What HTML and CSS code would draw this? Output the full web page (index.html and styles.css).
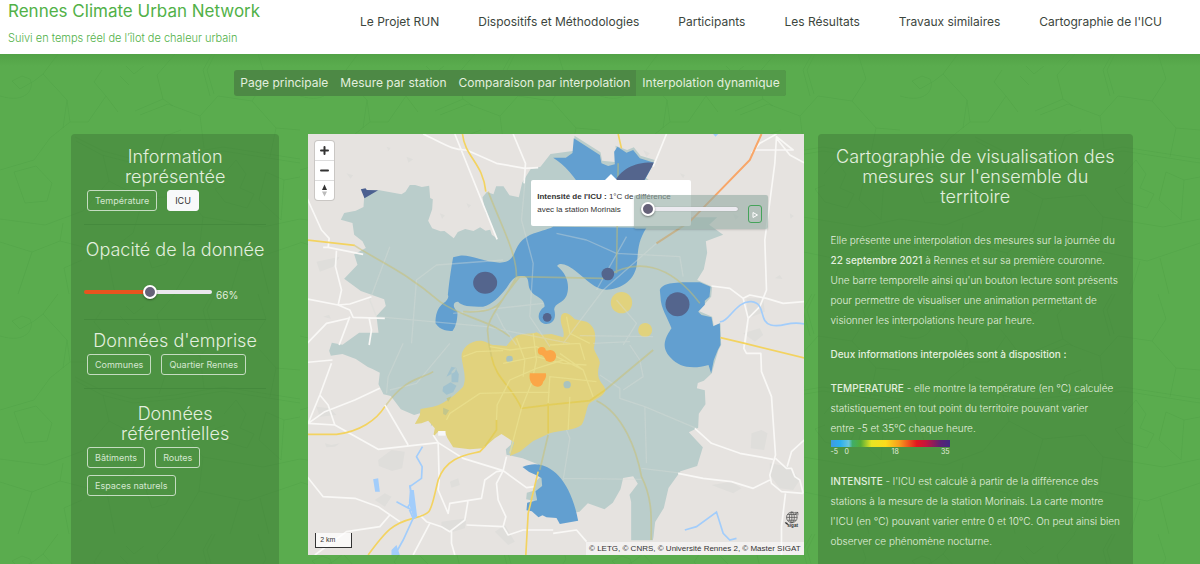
FILE: index.html
```html
<!DOCTYPE html>
<html lang="fr">
<head>
<meta charset="utf-8">
<meta name="viewport" content="width=device-width, initial-scale=1">
<title>Rennes Climate Urban Network</title>
<link rel="stylesheet" href="styles.css">
</head>
<body>
<header class="header">
  <div class="brand">
    <a class="brand-name" href="#">Rennes Climate Urban Network</a>
    <p class="brand-tag">Suivi en temps réel de l’îlot de chaleur urbain</p>
  </div>
  <nav class="menu">
    <a href="#">Le Projet RUN</a>
    <a href="#">Dispositifs et Méthodologies</a>
    <a href="#">Participants</a>
    <a href="#">Les Résultats</a>
    <a href="#">Travaux similaires</a>
    <a href="#">Cartographie de l'ICU</a>
  </nav>
</header>
<div class="page">
  <svg class="streets" aria-hidden="true">
    <defs>
      <pattern id="streets" width="300" height="240" patternUnits="userSpaceOnUse">
        <g fill="none" stroke="#4c9d43" stroke-opacity=".36" stroke-width="1">
          <path d="M0 42C26 50 35 35 30 25L22 22 12 27 20 35 34 27 43 20M43 20L58 0M43 20l24 26 3 22-20 16-16 22-34 10M70 68l18 0 18-26-12-14 8-12M106 42l12 16M67 46l-4 28M75 83l28 14 30 8 42-4 48-8 77 12M76 87l26 14 31 8 42-4 48-8 77 12M103 101l6 26-26 30-38 14-45-6M109 127l34 18 42-4 18 22 60 10 37-8M143 145l-10 34-26 20 8 41M203 163l-4 34-25 43M199 197l48 10 53-18M135 57l28-12-6-24 18-21M140 61l28-11 32 12 18-20 34 5 14-22-8-25M200 62l4 32M163 45l10 7M252 47l24 27 24 2M276 74l-6 29M18 240l14-42 28-11 47 12M32 198L0 188M60 187l3-18"/>
          <path d="M210 42l-7-26 9-16M214 40l-7-24 8-16M224 120l12-14 10 14-6 14 14 6-7 14-22-6-10-13 10-4M266 118l18 8 16-3M266 118l-7 28 22 20M284 126l-3 40M14 118l22-6 16 17-5 18-22 2zM146 196l12-7 14 9-6 12-14 4zM82 206l-18 8 5 26M230 240l10-33M260 204l9 36M126 12l8 8 10-8M120 22l9 9M181 76l-16 6-6 18"/>
        </g>
      </pattern>
    </defs>
    <rect width="100%" height="100%" fill="url(#streets)"/>
  </svg>
  <div class="tabs-row">
    <nav class="tabs">
      <a href="#">Page principale</a>
      <a href="#">Mesure par station</a>
      <a href="#">Comparaison par interpolation</a>
      <a class="active" href="#" aria-current="page">Interpolation dynamique</a>
    </nav>
  </div>
  <main class="columns">
    <aside class="panel controls">
      <section class="group">
        <h2>Information<br>représentée</h2>
        <div class="buttons">
          <button type="button" class="btn">Température</button>
          <button type="button" class="btn on">ICU</button>
        </div>
      </section>
      <section class="group opacity">
        <h2><label for="opacity">Opacité de la donnée</label></h2>
        <div class="slider-row">
          <input id="opacity" class="slider filled" type="range" min="0" max="100" value="52">
          <output for="opacity">66%</output>
        </div>
      </section>
      <section class="group">
        <h2>Données d'emprise</h2>
        <div class="buttons">
          <button type="button" class="btn">Communes</button>
          <button type="button" class="btn">Quartier Rennes</button>
        </div>
      </section>
      <section class="group">
        <h2>Données<br>référentielles</h2>
        <div class="buttons">
          <button type="button" class="btn">Bâtiments</button>
          <button type="button" class="btn">Routes</button>
          <button type="button" class="btn">Espaces naturels</button>
        </div>
      </section>
    </aside>

    <div class="map">
      <svg class="map-canvas" viewBox="12 12 1491 1263" preserveAspectRatio="xMidYMid slice" role="img" aria-label="Carte de l'ICU à Rennes">
        <rect x="0" y="0" width="1520" height="1290" fill="#e6e3e0"/>
        <g fill="#dfdedb">
          <path d="M225 990l40-30 40 5-8 50-30 8-40-15zM415 1175l75-10-5 30-35 10-35-8zM1345 910l30-10 18 10-10 50-40-5zM1400 1000l60 10 30 40-20 30-40-5-30-40zM1225 1065l60-10 30 20-25 15-20-8zM1330 505l50 0 5 40-50 20zM1320 610l50-15 10 20-25 20zM40 830l40 5 20 20-50 5zM575 1205l30-20 30 50-20 10zM215 1110l30-20 20 10-20 30zM40 395l70-15-20 30-40 15zM440 1055l25-10 5 20-25 8zM65 940l20 5 25-5-15 10-25 2z"/>
          <path d="M250 50l12 4-5 8zM130 130l20 6-8 10zM310 80l20 8-14 10zM410 250l15 6-8 10zM1020 60l20 10-10 10zM1130 130l15 5-5 10zM1415 445l15-10 8 12zM1460 250l12 8-10 8zM1290 250l18 10-12 10zM490 220l14 6-8 8zM60 560l18-6 5 12z"/>
        </g>
        <path fill="#bacdcb" d="M183 202L225 180l70 13 12-8 13-20 16 0 20 6 22-4 3 37 8 4-2 30-12 34 12 23 25 9 12-1 28 22 12-19 22-9 25 6 20-11 16 10 14-3 5 15 14 10-12-32-22-46-8-44 13-16 20 7 8-24 22 0 18 27 28 6 10-44 25-40 30-8 30-38 72-10 0-45 78 50 5 25 45 5-5-50 35 13 20-8 20 25 43 13-28 52 137 120 78 0-24 22 42 30-52 20 4 34-10 50-20 32 45 20-3 30-37 43 40 17 5 28 20-8 2 65-8 15-12 40-8 30-24 22-18 7-3 16 24 6 2 42-20 28-2 42-28 14 42 45-17 56-50 16-36 50-14 60-26 42-5 45-2 10-65 0 0-115-5-22 25-33-14-22-30 5-8 34-23 40-25 20-50-18-25 25-55 10-25-17-35-5-20-20-25-5 2-20 18-5 10-30 20-20-15-30-46-18-48-11-2-16 15-14 5-30-35-28-45 33-30 17-70-12-20-30-30-21-15 16 5-36-15-10-40 12-40-17-30-40-22-5-15-30 4-35-22-11-14-6-36-24-40-15-35 5-5-15 8-24 32 6 50-36 58 0-6-50 28-30-5-20-70-25-50-37 40-42-10-31 35-19-10-20-25-20-5-35-35-10 10-20 35-7 23-11z"/>
        <g fill="#629fd0">
          <path d="M470 377C500 373 540 395 590 398 650 395 620 345 680 315 710 302 730 300 750 290L1030 293C1000 340 1006 370 1000 410 990 455 950 478 910 479 875 478 850 448 820 425 795 405 770 395 762 408 795 435 800 470 790 497 780 520 755 518 753 538 762 570 745 583 728 582 700 577 700 545 724 530 727 505 695 500 685 485 670 470 682 447 665 439 640 434 630 442 610 474 590 500 565 525 540 530 500 530 475 528 465 515 450 514 446 530 463 545 463 570 458 590 448 603 435 603 412 603 397 580 397 555 402 535 420 520 434 512 438 500 434 495 440 440 445 410 450 382 470 377z"/>
          <path d="M1070 480C1078 460 1105 455 1190 457L1222 470l-3 30-14 12 0 12-20 21 10 10 30 7 5 27 20-9 2 65-8 15-12 30-8 40-8-25c-50 15-90 5-112-20-35-35-15-65 1-90-10-30-33-60-33-95z"/>
          <path d="M750 83l38 0 20-14 4-44 78 50 5 25 20 8 20-5-2-38 10-15 27 18 20-8 20 25 43 13-28 52-180 40c-30-50-60-85-95-107z"/>
          <path d="M658 1011C730 980 800 1040 825 1172L770 1182l-10-18-30-2-12-6-12 6-20-18-16-3 2-23 30-7-5-27 20-16-2-24-18-10-19-8z"/>
        </g>
        <g fill="#e1d27d">
          <path d="M475 680C475 655 500 630 535 632 552 634 560 645 575 645L610 648C625 630 635 615 655 613 675 610 690 612 700 607L715 614 745 612 780 622C788 600 765 580 775 555 785 542 800 552 815 568L850 575C875 590 882 610 872 655 878 675 890 685 890 700 882 725 885 735 887 745 895 765 910 770 905 785 895 805 865 810 855 825 848 845 845 870 835 885 815 902 770 900 740 910L690 933 650 965 620 978 633 937 595 912 575 925 540 955 500 958 450 952 433 925 425 905 405 905 390 920 395 895 375 872 355 880 335 882 350 855 352 837 390 830C430 820 465 785 480 770 492 740 478 710 475 680z"/>
          <circle cx="955" cy="518" r="32"/><circle cx="1026" cy="600" r="21"/>
        </g>
        <g fill="#9cc0cf" opacity=".8"><path d="M430 740l25-14 5-12-15-4-20 40zM445 725l12-12 10 20-2 24-20 0zM420 770l22-13 18 10-10 20-20 7-12-10z"/><circle cx="619" cy="687" r="10"/><circle cx="792" cy="764" r="11"/></g>
        <path fill="#c3c68b" d="M420 833l18 8-10 15-8-4zM430 805l15-6-10 16z"/>
        <g fill="none" stroke="#d8ded8" stroke-opacity=".38" stroke-width="4" stroke-linejoin="round">
          <path d="M260 350L200 510 220 560M325 640L340 450 400 405 600 390M220 560L550 590 800 640M450 550L720 520M640 645L600 590 580 550M665 160L655 270 690 400 680 560 740 650M760 310L850 330 940 370 1130 380 1140 440M1060 340L900 480 780 640M970 320L880 480M440 640L340 760 260 780M250 790L255 740 300 640M790 900L800 925 780 1050M780 1045L1015 1048M1015 1015L1140 1030M1025 830L1030 1000M890 735L950 775 950 805 1025 830 1180 895M980 645L1010 690 1020 740 960 780M940 510L1000 580 960 645M830 617L1050 620M870 640L980 635"/>
        </g>
        <g fill="none" stroke="#c9bf6d" stroke-opacity=".5" stroke-width="5" stroke-linejoin="round">
          <path d="M155 347C220 390 300 420 410 515 480 565 560 570 620 620M555 185C600 300 640 370 640 440 610 500 555 560 553 600 555 640 560 660 565 680M906 780L1050 660M640 440L900 445C1000 380 1100 400 1190 520M945 100L940 430M880 812C960 850 1000 960 1015 1040 1050 1110 1044 1170 1044 1230M245 830C310 740 350 750 390 725M735 915L710 1020M480 545C600 550 580 520 650 440"/>
        </g>
        <path fill="none" stroke="#e3cb4c" stroke-width="5" stroke-opacity=".7" d="M565 680C580 750 620 760 655 835L750 823 860 812 906 780M735 820L735 910M580 870V900L545 950"/>
        <g fill="none" stroke="#e9e08f" stroke-opacity=".75" stroke-width="4"><path d="M655 835L620 970M655 835L685 760 700 690 690 610M735 820L740 740 790 745 880 755M800 800L795 900M430 870L440 850 530 790 650 787 740 787M580 870L582 825 620 750 700 715 780 690M560 650L620 660 700 650 760 680 840 720M740 645L830 640 845 690M770 670L840 720 870 800M480 680L520 665 600 662M640 625L665 690 660 740M600 700L700 680 780 700 850 705M790 560L800 610 860 640"/></g>
        <g fill="#54658d">
          <path fill="#4b6090" d="M173 178l14-3 4 5 34 1-41 24z"/>
          <ellipse cx="546" cy="458" rx="36" ry="33"/><circle cx="732" cy="562" r="13"/><circle cx="914" cy="432" r="19"/><circle cx="1123" cy="523" r="36"/>
          <path d="M930 165C950 115 1000 95 1053 98L1015 165z"/>
        </g>
        <g fill="#fba647"><path d="M680 730l48 0c3 8-1 18-8 25-2 12-10 15-18 15-15-1-26-18-22-40z"/><circle cx="716" cy="663" r="12"/><circle cx="741" cy="678" r="18"/><path d="M716 675l10 8 10-20-10-2z"/></g>
        <g fill="none" stroke="#f9f8f6" stroke-width="5" stroke-linejoin="round">
          <path d="M455 12L582 328M360 12C420 40 450 62 490 60L580 100 665 115 705 113M630 12L667 100 663 160M12 205L55 300 78 325 75 352 180 373M60 352H75M100 362L97 410 115 480 105 525M12 507L105 525 140 522 205 500M105 525L140 540 150 562 245 565M140 564L70 580 12 640M140 560L108 645M198 565L205 600 198 645M12 697L88 690M85 700L50 795 15 880 95 885 225 958 405 938 480 985 600 1022 670 1073 695 1070M50 795L75 825 95 885M15 880L65 845 155 810 230 775M245 825L315 945M390 915L405 938 408 1050 405 1080 435 1150 440 1120 535 1105 545 1050 580 1025 600 1022 610 980M600 1022L580 1060 585 1110 608 1160 600 1190 490 1185M600 1190L615 1215 660 1200 750 1200M495 1110L485 1170 440 1205 415 1190 370 1175 350 1155M445 1200L445 1240 455 1275M380 1180L330 1275M12 1040L60 1100 155 1105 225 1130 290 1175M260 1155L230 1190 130 1205 35 1275M750 1210L820 1200 850 1235"/>
          <path d="M1345 70L1370 40 1420 12M1420 25L1460 75 1503 98M1350 60L1470 60 1420 20 1415 100 1385 330 1390 480 1370 530 1335 565 1325 645M1225 468L1280 475 1320 505 1335 565M1320 505L1340 495 1390 505 1440 520 1503 515M1335 565L1322 655 1330 670 1373 670 1375 725 1405 800 1417 975 1400 1035 1405 1060 1435 1085 1500 1090M1417 985L1450 1015 1465 1015 1475 1040 1490 1050 1500 1090M1452 1010L1465 965 1503 930M1125 1030L1200 1045 1285 1055 1350 1075 1400 1050M1175 895L1225 940 1310 970 1410 988M1447 1090L1435 1190 1435 1275M1090 12L1050 110"/>
        </g>
        <path fill="#f7f7f8" d="M405 903h22v14h-22z"/>
        <path fill="none" stroke="#f3d360" stroke-width="5" d="M12 330L155 346M478 12C485 80 540 100 548 185M12 913H100C170 905 220 870 245 830M195 1275C250 1200 270 1180 330 1165S380 1150 405 1050C430 980 490 975 530 965L545 950M705 1025L675 1150 668 1275M945 12L955 55M1252 623L1325 640 1503 684"/>
        <path fill="none" stroke="#f8a668" stroke-width="6" d="M1375 12L1340 90 1160 275"/>
        <path fill="none" stroke="#caa872" stroke-width="6" stroke-opacity=".7" d="M1160 275L1060 340"/>
        <path fill="none" stroke="#a2cdfb" stroke-width="5" d="M358 950L340 980 357 1010 355 1045 320 1070 335 1145 280 1115M320 1065L328 1110 315 1130 330 1165 300 1230 275 1275M1145 1200L1180 1190 1240 1146 1260 1210 1280 1230 1300 1225M1250 575C1275 580 1300 510 1345 515S1365 575 1403 585 1455 570 1503 582"/>
        <path fill="#a2cdfb" d="M210 1048l15-3 5 40-14 0zM320 1080l12 0 10 80-10 8-15-50zM265 1260l15-15 10 30-25 0zM1230 12l15 0-8 8z"/>
      </svg>

      <div class="zoom">
        <button type="button" aria-label="Zoom avant"><svg viewBox="0 0 19 19"><path d="M9.500 6v7M6 9.500h7"/></svg></button>
        <button type="button" aria-label="Zoom arrière"><svg viewBox="0 0 19 19"><path d="M6 9.500h7"/></svg></button>
        <button type="button" aria-label="Orienter au nord"><svg viewBox="0 0 19 19"><path class="north" d="M9.500 3.500L12 9H7z"/><path class="south" d="M9.500 15.500L12 10.500H7z"/></svg></button>
      </div>

      <div class="tip"><b>Intensité de l'ICU :</b> 1°C de différence<br>avec la station Morinais</div>

      <div class="player">
        <input class="slider" type="range" min="0" max="24" value="0" aria-label="Heure">
        <button type="button" class="play" aria-label="Lecture"><svg viewBox="0 0 12 16"><path d="M4 6.500v5l4.500-2.500z"/></svg></button>
      </div>

      <svg class="sigat" viewBox="0 0 42 48" aria-hidden="true">
        <g fill="none" stroke="#4b4b4b" stroke-width="2"><circle cx="22" cy="18" r="15"/><ellipse cx="22" cy="18" rx="7" ry="15"/><path d="M7 18h30M22 3v30M10 10h24M10 26h24M31 4h8v8M39 3l-7 8"/></g>
        <path d="M2 31l7 2 4 7-8-3z" fill="#333"/>
        <text x="9" y="45">sigat</text>
      </svg>
      <div class="scale">2 km</div>
      <div class="credit">© LETG, © CNRS, © Université Rennes 2, © Master SIGAT</div>
    </div>

    <article class="panel info">
      <h2>Cartographie de visualisation des<br>mesures sur l'ensemble du<br>territoire</h2>
      <p>Elle présente une interpolation des mesures sur la journée du<br><b>22 septembre 2021</b> à Rennes et sur sa première couronne.<br>Une barre temporelle ainsi qu'un bouton lecture sont présents<br>pour permettre de visualiser une animation permettant de<br>visionner les interpolations heure par heure.</p>
      <p><b>Deux informations interpolées sont à disposition :</b></p>
      <p class="with-legend"><b>TEMPERATURE</b> - elle montre la température (en °C) calculée<br>statistiquement en tout point du territoire pouvant varier<br>entre -5 et 35°C chaque heure.</p>
      <div class="legend">
        <div class="legend-bar"></div>
        <div class="legend-marks"><span>-5</span><span>0</span><span>18</span><span>35</span></div>
      </div>
      <p><b>INTENSITE</b> - l'ICU est calculé à partir de la différence des<br>stations à la mesure de la station Morinais. La carte montre<br>l'ICU (en °C) pouvant varier entre 0 et 10°C. On peut ainsi bien<br>observer ce phénomène nocturne.</p>
    </article>
  </main>
</div>
</body>
</html>
```
FILE: styles.css
```css
* { box-sizing: border-box; }

body {
  margin: 0;
  min-height: 100vh;
  display: flex;
  flex-direction: column;
  font-family: Inter, "Open Sans", sans-serif;
  color: #e3efdf;
}

h2, p { margin: 0; }
a { color: inherit; text-decoration: none; }
button { font-family: inherit; padding: 0; cursor: pointer; }

.header {
  display: flex;
  justify-content: space-between;
  height: 54px;
  padding: 0 38px 0 8px;
  background: #fff;
}
.brand { color: #51b148; white-space: nowrap; }
.brand-name { display: block; font-size: 17px; line-height: 22px; }
.brand-tag { margin-top: 8px; font-size: 11px; font-weight: 300; line-height: 16px; }
.menu {
  display: flex;
  gap: 39px;
  padding-top: 12px;
  font-size: 12px;
  line-height: 20px;
  color: #3c463d;
  white-space: nowrap;
}

.page {
  position: relative;
  flex: 1;
  display: flex;
  flex-direction: column;
  background: linear-gradient(#52a246, #5aac4e 12px);
}
.streets { position: absolute; inset: 0; width: 100%; height: 100%; }

.tabs-row {
  position: relative;
  display: flex;
  justify-content: center;
  width: 85%;
  padding: 16px 0 38px;
}
.tabs {
  display: flex;
  border-radius: 3px;
  overflow: hidden;
  background: #4d8945;
  font-size: 12px;
  line-height: 26px;
  white-space: nowrap;
}
.tabs a { padding: 0 6px; }
.tabs .active { background: #539a49; }

.columns {
  position: relative;
  flex: 1;
  display: grid;
  grid-template-columns: 224fr 497fr 313fr;
  column-gap: 14px;
  padding: 0 67px 0 71px;
}
.panel {
  padding: 13px 13px 0;
  border-radius: 4px 4px 0 0;
  background: rgba(63, 121, 56, .5);
}
.panel h2 {
  font-size: 18px;
  font-weight: 300;
  line-height: 20px;
  text-align: center;
  white-space: nowrap;
}

.controls { margin-right: 15px; }
.group {
  padding-bottom: 13px;
  margin-bottom: 15px;
  border-bottom: 1px solid #458a3d;
}
.group:last-child { border: 0; }
.buttons { display: flex; flex-wrap: wrap; gap: 7px 10px; padding: 3px 3px 0; }
.btn {
  height: 21px;
  padding: 0 7px;
  border: 1px solid #c5dcc1;
  border-radius: 3px;
  background: transparent;
  color: #d5e7d1;
  font-size: 9px;
}
.btn.on { background: #f8f9fa; border-color: #f8f9fa; color: #333; }
.opacity { padding-bottom: 14px; margin-bottom: 11px; }
.slider-row { display: flex; align-items: center; gap: 4px; padding-top: 19px; font-size: 10px; line-height: 20px; }
.slider-row output { padding-top: 6px; }

.slider {
  -webkit-appearance: none;
  appearance: none;
  flex: none;
  height: 4px;
  margin: 0;
  border-radius: 2px;
  background: #ebe8ee;
}
.slider::-webkit-slider-thumb {
  -webkit-appearance: none;
  width: 14px;
  height: 14px;
  border: 2px solid #fff;
  border-radius: 50%;
  background: #666279;
  box-shadow: 0 1px 2px rgba(0, 0, 0, .4);
}
.filled { width: 128px; background: linear-gradient(90deg, #e8541e 52%, #ebe8ee 52%); }

.map { position: relative; align-self: start; height: 421px; overflow: hidden; font-family: "Liberation Sans", Arial, sans-serif; color: #333; }
.map-canvas { display: block; width: 100%; height: 100%; }
.zoom {
  position: absolute;
  top: 7px;
  left: 7px;
  width: 19px;
  border-radius: 3px;
  background: #fff;
  box-shadow: 0 0 0 1px rgba(0, 0, 0, .12);
}
.zoom button { display: block; width: 100%; height: 19px; border: 0; background: none; }
.zoom button + button { height: 20px; border-top: 1px solid #ddd; }
.zoom svg { display: block; width: 19px; height: 19px; fill: none; stroke: #333; stroke-width: 2; stroke-linecap: round; }
.zoom .north { fill: #333; stroke: none; }
.zoom .south { fill: #bbb; stroke: none; }

.tip {
  position: absolute;
  top: 46px;
  left: 223px;
  width: 160px;
  padding: 10px 6px;
  border-radius: 2px;
  background: #fff;
  font-size: 8px;
  line-height: 13px;
  white-space: nowrap;
}
.tip::before {
  content: "";
  position: absolute;
  top: -6px;
  left: 73px;
  border: 7px solid transparent;
  border-top: 0;
  border-bottom-color: #fff;
}
.player {
  position: absolute;
  top: 61px;
  left: 326px;
  display: flex;
  width: 134px;
  height: 34px;
  padding: 12px 7px 0;
  gap: 10px;
  border-radius: 2px;
  background: rgba(148, 172, 165, .62);
  box-shadow: 0 1px 2px rgba(0, 0, 0, .15);
}
.player .slider { width: 97px; background: #eceaf0; box-shadow: 0 0 1px #777; }
.play { width: 14px; height: 18px; margin-top: -2px; border: 1px solid #45a35a; border-radius: 3px; background: none; }
.play svg { display: block; width: 12px; height: 16px; fill: none; stroke: #fff; }
.sigat { position: absolute; right: 5px; bottom: 27px; width: 15px; height: 17px; font: bold 13px "Liberation Sans", sans-serif; fill: #333; }
.scale {
  position: absolute;
  left: 7px;
  bottom: 7px;
  width: 37px;
  height: 15px;
  padding-left: 4px;
  border: 1px solid #333;
  border-top: 0;
  background: rgba(255, 255, 255, .75);
  font-size: 7px;
  line-height: 14px;
}
.credit {
  position: absolute;
  right: 0;
  bottom: 0;
  padding: 0 3px;
  background: rgba(255, 255, 255, .5);
  font-size: 8px;
  line-height: 13px;
  white-space: nowrap;
}

.info h2 { margin-bottom: 23px; }
.info p { margin-bottom: 14px; font-size: 10px; font-weight: 300; line-height: 20px; white-space: nowrap; }
.info b { font-weight: 500; }
.info .with-legend { margin-bottom: 2px; }
.legend { width: 119px; margin-bottom: 15px; }
.legend-bar {
  height: 7px;
  background: linear-gradient(90deg, #3f9be0, #2bb0ee 8%, #6cc5dc 15%, #3fae68 18%, #55ad36 25%, #e8e523 34%, #fbdc1c 46%, #f8a01c 57%, #e4161f 72%, #c2153f 80%, #5b2274 92%, #402a80);
}
.legend-marks { display: grid; grid-template-columns: 14px 47px 1fr auto; font-size: 7px; line-height: 9px; }
```
